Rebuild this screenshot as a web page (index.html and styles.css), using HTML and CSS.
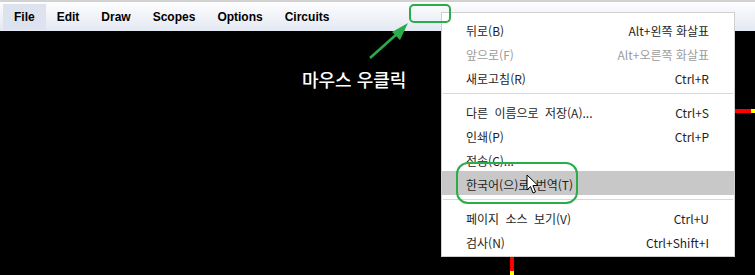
FILE: index.html
```html
<!DOCTYPE html>
<html lang="ko">
<head>
    <meta charset="UTF-8">
    <meta name="viewport" content="width=device-width, initial-scale=1.0">
    <title>Circuit Simulator</title>
    <link rel="stylesheet" href="styles.css">
</head>
<body>
    <div class="topline"></div>

    <!-- App menu bar -->
    <nav class="menubar">
        <span class="menubar-item active">File</span>
        <span class="menubar-item">Edit</span>
        <span class="menubar-item">Draw</span>
        <span class="menubar-item">Scopes</span>
        <span class="menubar-item">Options</span>
        <span class="menubar-item">Circuits</span>
    </nav>

    <!-- Drawing canvas -->
    <main class="canvas">
        <div class="wire wire-h"><span class="node"></span></div>
        <div class="wire wire-v"><span class="node"></span></div>
    </main>

    <!-- Browser context menu -->
    <div class="context-menu">
        <div class="menu-item"><span class="label">뒤로(B)</span><span class="shortcut">Alt+왼쪽 화살표</span></div>
        <div class="menu-item disabled"><span class="label">앞으로(F)</span><span class="shortcut">Alt+오른쪽 화살표</span></div>
        <div class="menu-item"><span class="label">새로고침(R)</span><span class="shortcut">Ctrl+R</span></div>
        <div class="separator"></div>
        <div class="menu-item"><span class="label">다른 이름으로 저장(A)...</span><span class="shortcut">Ctrl+S</span></div>
        <div class="menu-item"><span class="label">인쇄(P)</span><span class="shortcut">Ctrl+P</span></div>
        <div class="menu-item"><span class="label">전송(C)...</span></div>
        <div class="menu-item hover"><span class="label">한국어(으)로 번역(T)</span></div>
        <div class="separator"></div>
        <div class="menu-item"><span class="label">페이지 소스 보기(V)</span><span class="shortcut">Ctrl+U</span></div>
        <div class="menu-item"><span class="label">검사(N)</span><span class="shortcut">Ctrl+Shift+I</span></div>
    </div>

    <!-- Annotations -->
    <svg class="annotations" width="755" height="275" viewBox="0 0 755 275">
        <rect x="410" y="5" width="40" height="17" rx="4" fill="none" stroke="#2aac4b" stroke-width="2"/>
        <rect x="457" y="163" width="120" height="40" rx="11" fill="none" stroke="#2aac4b" stroke-width="2"/>
        <line x1="370" y1="58" x2="398" y2="33" stroke="#2aac4b" stroke-width="2.5"/>
        <polygon points="408,23 392,32 400,40" fill="#2aac4b"/>
    </svg>
    <div class="callout">마우스 우클릭</div>

    <svg class="cursor" width="13" height="21" viewBox="0 0 13 21">
        <path d="M1 1 L1 16 L4.5 12.5 L7 19 L9.5 18 L7 11.5 L12 11.5 Z" fill="#fff" stroke="#000" stroke-width="1" stroke-linejoin="miter"/>
    </svg>
</body>
</html>
```

FILE: styles.css
```css
body {
    margin: 0;
    width: 755px;
    height: 275px;
    overflow: hidden;
    background-color: #000;
    position: relative;
    font-family: "Liberation Sans", Arial, sans-serif;
}
.topline {
    height: 2px;
    background-color: #d2d2d2;
}
.menubar {
    display: flex;
    height: 29px;
    padding-left: 3px;
    background: linear-gradient(#fdfdfe, #e3e8f2);
}
.menubar-item {
    display: flex;
    align-items: center;
    margin-top: 2px;
    margin-bottom: 1px;
    padding: 0 11px;
    font-size: 12px;
    font-weight: bold;
    color: #000;
}
.menubar-item.active {
    background-color: #dce2ee;
}
.canvas {
    position: relative;
    height: 244px;
    background-color: #000;
}
.wire {
    position: absolute;
    background-color: #f00;
}
.wire .node {
    position: absolute;
    width: 4px;
    height: 4px;
    background-color: #ff0;
}
.wire-h {
    left: 735px;
    top: 78px;
    width: 20px;
    height: 4px;
}
.wire-h .node {
    right: 0;
    top: 0;
}
.wire-v {
    left: 510px;
    top: 226px;
    width: 4px;
    height: 18px;
}
.wire-v .node {
    left: 0;
    bottom: 0;
}
.context-menu {
    position: absolute;
    left: 441px;
    top: 12px;
    width: 292px;
    padding: 4px 0 3px;
    background-color: #fff;
    border: 1px solid #cfcfcf;
    font-family: "Noto Sans CJK KR", "Noto Sans", sans-serif;
    font-size: 12px;
    color: #1e1e1e;
}
.menu-item {
    display: flex;
    justify-content: space-between;
    align-items: center;
    height: 24px;
    padding: 2px 25px 0 24px;
    box-sizing: border-box;
    white-space: nowrap;
}
.menu-item .label {
    word-spacing: 3px;
}
.menu-item.disabled {
    color: #9c9c9c;
}
.menu-item.hover {
    background-color: #c8c8c8;
}
.separator {
    height: 1px;
    margin: 4px 1px 5px;
    background-color: #d8d8d8;
}
.annotations {
    position: absolute;
    left: 0;
    top: 0;
    pointer-events: none;
}
.callout {
    position: absolute;
    left: 302px;
    top: 66px;
    font-family: "Noto Sans CJK KR", sans-serif;
    font-size: 18px;
    font-weight: 500;
    color: #fff;
    white-space: nowrap;
}
.cursor {
    position: absolute;
    left: 526px;
    top: 174px;
}
```
